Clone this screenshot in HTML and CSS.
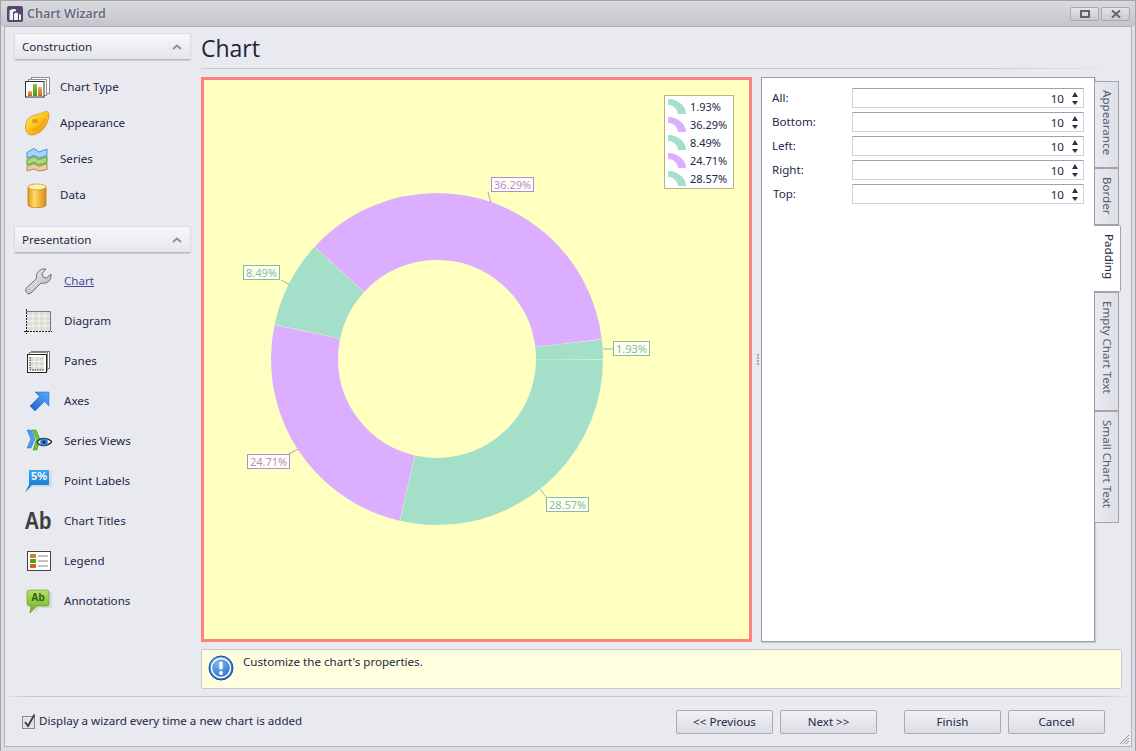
FILE: index.html
```html
<!DOCTYPE html>
<html lang="en">
<head>
<meta charset="utf-8">
<title>Chart Wizard</title>
<link rel="stylesheet" href="styles.css">
</head>
<body>
<svg class="defs" width="0" height="0" aria-hidden="true">
  <defs>
    <linearGradient id="gOrange" x1="0" y1="0" x2="0" y2="1"><stop offset="0" stop-color="#f0b060"/><stop offset="1" stop-color="#c8651a"/></linearGradient>
    <linearGradient id="gGreen" x1="0" y1="0" x2="0" y2="1"><stop offset="0" stop-color="#8cc63f"/><stop offset="1" stop-color="#4f8f10"/></linearGradient>
    <linearGradient id="gPalette" x1="0" y1="0" x2="1" y2="1"><stop offset="0" stop-color="#fff070"/><stop offset=".5" stop-color="#fcc21c"/><stop offset="1" stop-color="#d98a0a"/></linearGradient>
    <linearGradient id="gCyl" x1="0" y1="0" x2="1" y2="0"><stop offset="0" stop-color="#e09a18"/><stop offset=".35" stop-color="#ffdc6a"/><stop offset="1" stop-color="#d88a10"/></linearGradient>
    <linearGradient id="gWrench" x1="0" y1="0" x2="1" y2="1"><stop offset="0" stop-color="#fafafa"/><stop offset="1" stop-color="#a9abb0"/></linearGradient>
    <linearGradient id="gArrow" x1="1" y1="0" x2="0" y2="1"><stop offset="0" stop-color="#5aaaf4"/><stop offset="1" stop-color="#1a62cc"/></linearGradient>
    <linearGradient id="gBubble" x1="0" y1="0" x2="0" y2="1"><stop offset="0" stop-color="#35a8f2"/><stop offset="1" stop-color="#0f6cc8"/></linearGradient>
    <linearGradient id="gNote" x1="0" y1="0" x2="0" y2="1"><stop offset="0" stop-color="#b6e06c"/><stop offset="1" stop-color="#6fae24"/></linearGradient>
    <radialGradient id="gInfo" cx=".4" cy=".3" r=".8"><stop offset="0" stop-color="#7cb8f4"/><stop offset="1" stop-color="#1d5fc0"/></radialGradient>
    <symbol id="arc" viewBox="0 0 18 15"><path d="M0 0C10 0 18 7 18 15H10C10 11 6 6 0 6Z"/></symbol>
  </defs>
</svg>
<div class="window">
  <header class="titlebar">
    <svg class="app-icon" viewBox="0 0 16 16"><rect width="16" height="16" rx="2" fill="#57476f"/><path d="M2.500 14V4.500C4 3 7 2.500 9 3.500V5.500C7.500 5 6 5.500 6 7V14ZM7 14V8C8 6.500 10 6.300 11 7.300V14ZM12 14V8.500C13 8 13.800 8.300 14 9V14Z" fill="#f4f2f8"/></svg>
    <span class="title">Chart Wizard</span>
    <div class="win-buttons">
      <span class="win-btn"><svg width="10" height="8" viewBox="0 0 10 8"><rect x="1" y="1" width="8" height="6" fill="none" stroke="#5f6270" stroke-width="2"/></svg></span>
      <span class="win-btn"><svg width="10" height="8" viewBox="0 0 10 8"><path d="M1 .5 9 7.500M9 .5 1 7.500" stroke="#5f6270" stroke-width="2"/></svg></span>
    </div>
  </header>
  <div class="client">
    <div class="main">
      <aside class="sidebar">
        <div class="group-head"><span>Construction</span><svg width="10" height="6" viewBox="0 0 10 6"><path d="M1 5 5 1.500 9 5" fill="none" stroke="#8d909b" stroke-width="2"/></svg></div>
        <ul class="nav nav-a">
          <li><span class="slot"><svg class="ico" viewBox="0 0 28 28"><rect x="7.500" y="4.500" width="18" height="16" fill="#fff" stroke="#8e8e8e"/><rect x="4.500" y="6.500" width="18" height="16" fill="#fff" stroke="#8e8e8e"/><rect x="1.500" y="8.500" width="18.500" height="15.500" fill="#fff" stroke="#333"/><rect x="4" y="18" width="4" height="5" fill="url(#gOrange)"/><rect x="9" y="11" width="4" height="12" fill="url(#gGreen)"/><rect x="14" y="14" width="4" height="9" fill="url(#gOrange)"/></svg></span>Chart Type</li>
          <li><span class="slot"><svg class="ico" viewBox="0 0 28 28"><path d="M1.500 19C1 12 5 8 9 6.500 13 5 17 5 20 3 23 1.500 25.500 3 25 7 24 15 19 23 11 25.500 6 27 2 25 1.500 19Z" fill="url(#gPalette)" stroke="#c9820c" stroke-width=".6"/><ellipse cx="11" cy="12" rx="3" ry="2" fill="#e29a10"/><path d="M8 21C12 21 18 17 21 10" fill="none" stroke="#eea814" stroke-width="2"/></svg></span>Appearance</li>
          <li><span class="slot"><svg class="ico" viewBox="0 0 28 28"><path d="M3 21.500 10 18.500 15 21.500 23 18.500V24.500L15 26 10 24 3 26Z" fill="#e6cf9a" stroke="#a98b50"/><path d="M3 14.500 10 11.500 15 14.500 23 11.500V17.500L15 20 10 17.500 3 20Z" fill="#a8d87a" stroke="#5d9a35"/><path d="M3 7.500 10 3.500 15 7 23 4V10.500L15 13 10 10.500 3 13Z" fill="#a4d4f8" stroke="#4a90d8"/></svg></span>Series</li>
          <li><span class="slot"><svg class="ico" viewBox="0 0 28 28"><path d="M4 6V24C4 27.500 22 27.500 22 24V6Z" fill="url(#gCyl)" stroke="#b97a10" stroke-width=".7"/><ellipse cx="13" cy="6" rx="9" ry="3" fill="#fff0b0" stroke="#c98c1c" stroke-width=".7"/></svg></span>Data</li>
        </ul>
        <div class="group-head group-second"><span>Presentation</span><svg width="10" height="6" viewBox="0 0 10 6"><path d="M1 5 5 1.500 9 5" fill="none" stroke="#8d909b" stroke-width="2"/></svg></div>
        <ul class="nav nav-b">
          <li><span class="slot"><svg class="ico" viewBox="0 0 28 28"><path d="M2 21.500 12.500 11.500C11.500 6 16 1 22 2L18 6.500 19 10 22.500 11 27 7C28 13 23 17.500 17 16L7 26C5 28 .5 26 2 21.500Z" fill="url(#gWrench)" stroke="#6d7079"/><circle cx="5" cy="23.500" r="1.300" fill="#fff" stroke="#7d7f87" stroke-width=".6"/></svg></span><a class="link" href="#">Chart</a></li>
          <li><span class="slot"><svg class="ico" viewBox="0 0 28 28"><rect x="2" y="4" width="24" height="20" fill="#dcdcd6"/><path d="M2 9H26M2 14H26M2 19H26M9 4V24M15 4V24M21 4V24" stroke="#f6f6f2"/><path d="M2 4.500H26.500V24" fill="none" stroke="#77777a"/><path d="M2.500 2V27M0 24.500H28" stroke="#222" stroke-dasharray="2 1"/></svg></span>Diagram</li>
          <li><span class="slot"><svg class="ico" viewBox="0 0 28 28"><rect x="7.500" y="4.500" width="18" height="17" fill="#fff" stroke="#777"/><rect x="5.500" y="5.500" width="18" height="18" fill="#fff" stroke="#888"/><rect x="3.500" y="7.500" width="19" height="18" fill="#fff" stroke="#222"/><rect x="6" y="10" width="14" height="13" fill="#d8d8d2"/><path d="M6 14.500H20M6 19H20M10.500 10V23M15 10V23" stroke="#f6f6f2"/><path d="M6 10V23H20" fill="none" stroke="#222" stroke-dasharray="1.500 1"/></svg></span>Panes</li>
          <li><span class="slot"><svg class="ico" viewBox="0 0 28 28"><path d="M11 5H25V19L20.500 14.500 11 24 6 19 15.500 9.500Z" fill="url(#gArrow)" stroke="#1e63c4" stroke-width=".5"/></svg></span>Axes</li>
          <li><span class="slot"><svg class="ico" viewBox="0 0 28 28"><path d="M8 3H12L16 12 13 23H9L12.500 12Z" fill="#6cc13a" stroke="#3f8f20" stroke-width=".5"/><path d="M3 3H7L11 12 7 21H3L7 12Z" fill="#4d9cf0" stroke="#1d62c0" stroke-width=".5"/><path d="M13 15C16 10.500 23 10 28 14.500 23 20 16 20 13 15Z" fill="#f4f6f8" stroke="#222" stroke-width="1.300"/><circle cx="20" cy="15" r="3.800" fill="#2f7fd8"/><circle cx="20" cy="15" r="1.600" fill="#0c2f62"/></svg></span>Series Views</li>
          <li><span class="slot"><svg class="ico" viewBox="0 0 28 28"><path d="M7 4H28V20H8L2 27 4 20H7Z" fill="#d9dadd"/><path d="M5 3H25V18H8L1 25 5 18Z" fill="url(#gBubble)"/><text class="ico-num" x="15" y="13" text-anchor="middle">5%</text></svg></span>Point Labels</li>
          <li><span class="slot"><svg class="ico" viewBox="0 0 33 28" preserveAspectRatio="none"><text class="ico-ab-text" x="0.500" y="22">Ab</text></svg></span>Chart Titles</li>
          <li><span class="slot"><svg class="ico" viewBox="0 0 28 28"><rect x="3.500" y="4.500" width="23" height="19" fill="#fff" stroke="#444"/><rect x="6" y="7" width="6" height="4" fill="#c88a3a"/><rect x="6" y="12" width="6" height="4" fill="#5f9e18"/><rect x="6" y="17" width="6" height="4" fill="#d8660f"/><path d="M14 9H24M14 14H24M14 19H24" stroke="#888"/></svg></span>Legend</li>
          <li><span class="slot"><svg class="ico" viewBox="0 0 28 28"><path d="M6 5H28V21H16L10 26 11 21H6Z" fill="#d9dadd"/><path d="M6 3H23Q25 3 25 5V17Q25 19 23 19H13L6 26 7 19Q3 19 3 17V5Q3 3 6 3Z" fill="url(#gNote)" stroke="#5f9a1e" stroke-width=".6"/><text class="ico-note" x="14" y="14" text-anchor="middle">Ab</text></svg></span>Annotations</li>
        </ul>
      </aside>
      <section class="content">
        <h1 class="heading">Chart</h1>
        <div class="work">
          <div class="chart">
            <svg class="donut" width="545" height="559" viewBox="0 0 545 559">
              <g fill="none" stroke-width="67" transform="translate(233 279) scale(1 -1)">
                <circle r="132.500" pathLength="100" stroke="#a4dfc9" stroke-dasharray="1.890 98.110"/>
                <circle r="132.500" pathLength="100" stroke="#dcaeff" stroke-dasharray="36.250 63.750" stroke-dashoffset="-1.930"/>
                <circle r="132.500" pathLength="100" stroke="#a4dfc9" stroke-dasharray="8.450 91.550" stroke-dashoffset="-38.220"/>
                <circle r="132.500" pathLength="100" stroke="#dcaeff" stroke-dasharray="24.670 75.330" stroke-dashoffset="-46.710"/>
                <circle r="132.500" pathLength="100" stroke="#a4dfc9" stroke-dasharray="28.530 71.470" stroke-dashoffset="-71.420"/>
              </g>
              <g stroke-width="1" fill="none">
                <path d="M399 269H409" stroke="#8fc4b0"/>
                <path d="M284 112 287 123" stroke="#b794d4"/>
                <path d="M77 200 86 205" stroke="#8fc4b0"/>
                <path d="M85 374 94 369" stroke="#b794d4"/>
                <path d="M336 409 343 418" stroke="#8fc4b0"/>
              </g>
            </svg>
            <span class="tag tag-teal tag-a">1.93%</span>
            <span class="tag tag-purple tag-b">36.29%</span>
            <span class="tag tag-teal tag-c">8.49%</span>
            <span class="tag tag-purple tag-d">24.71%</span>
            <span class="tag tag-teal tag-e">28.57%</span>
            <ul class="legend">
              <li><svg class="arc arc-teal"><use href="#arc"/></svg>1.93%</li>
              <li><svg class="arc arc-purple"><use href="#arc"/></svg>36.29%</li>
              <li><svg class="arc arc-teal"><use href="#arc"/></svg>8.49%</li>
              <li><svg class="arc arc-purple"><use href="#arc"/></svg>24.71%</li>
              <li><svg class="arc arc-teal"><use href="#arc"/></svg>28.57%</li>
            </ul>
          </div>
          <div class="splitter"><i></i><i></i><i></i><i></i></div>
          <div class="props">
            <div class="form">
              <div class="row"><label>All:</label><div class="spin"><span>10</span><span class="arrows"><i class="up"></i><i class="down"></i></span></div></div>
              <div class="row"><label>Bottom:</label><div class="spin"><span>10</span><span class="arrows"><i class="up"></i><i class="down"></i></span></div></div>
              <div class="row"><label>Left:</label><div class="spin"><span>10</span><span class="arrows"><i class="up"></i><i class="down"></i></span></div></div>
              <div class="row"><label>Right:</label><div class="spin"><span>10</span><span class="arrows"><i class="up"></i><i class="down"></i></span></div></div>
              <div class="row"><label class="label-top">Top:</label><div class="spin"><span>10</span><span class="arrows"><i class="up"></i><i class="down"></i></span></div></div>
            </div>
          </div>
          <div class="tabs">
            <div class="tab tab-1">Appearance</div>
            <div class="tab tab-2">Border</div>
            <div class="tab tab-3 active">Padding</div>
            <div class="tab tab-4">Empty Chart Text</div>
            <div class="tab tab-5">Small Chart Text</div>
          </div>
        </div>
        <div class="info">
          <svg class="info-icon" width="26" height="26" viewBox="0 0 26 26"><circle cx="13" cy="13" r="12" fill="url(#gInfo)" stroke="#1d4f9e"/><circle cx="13" cy="13" r="9.500" fill="none" stroke="#fff" stroke-width="1.500"/><rect x="11.300" y="6.500" width="3.400" height="8" rx="1.500" fill="#fff"/><circle cx="13" cy="18" r="2" fill="#fff"/></svg>
          <span>Customize the chart's properties.</span>
        </div>
      </section>
    </div>
    <footer class="footer">
      <label class="check"><svg width="15" height="16" viewBox="0 0 15 16"><rect x=".5" y="3.500" width="12" height="12" fill="#e4e4e8" stroke="#8a8a96"/><path d="M3 9 6 13 12.500 1.500" fill="none" stroke="#3c3c46" stroke-width="1.800"/></svg>Display a wizard every time a new chart is added</label>
      <div class="buttons">
        <button class="btn" type="button">&lt;&lt; Previous</button>
        <button class="btn" type="button">Next &gt;&gt;</button>
        <button class="btn btn-gap" type="button">Finish</button>
        <button class="btn" type="button">Cancel</button>
      </div>
      <svg class="grip" width="11" height="11" viewBox="0 0 11 11"><path d="M1 10 10 1M4 10 10 4M7 10 10 7" stroke="#8d8e98"/></svg>
    </footer>
  </div>
</div>
</body>
</html>
```
FILE: styles.css
```css
* { box-sizing: border-box; }
html, body { margin: 0; padding: 0; }
body {
  width: 1136px;
  height: 751px;
  overflow: hidden;
  font: 11.6px "Noto Sans", sans-serif;
  color: #1e2748;
}
.defs { position: absolute; }
ul { list-style: none; margin: 0; padding: 0; }

.window {
  width: 1136px;
  height: 751px;
  display: flex;
  flex-direction: column;
  background: #dddee2;
  border: 1px solid #a2a3ae;
  border-bottom: 0;
  padding: 0 3px 4px;
}
.titlebar {
  height: 25px;
  display: flex;
  align-items: center;
  margin: 0 -3px;
  padding: 0 5px 0 6px;
  background: linear-gradient(#d9dade, #c5c6cb);
}
.app-icon { width: 16px; height: 16px; }
.title {
  margin-left: 4px;
  font-size: 12.5px;
  font-weight: 600;
  color: #666a80;
  text-shadow: 0 0 2px #f0f0f4;
}
.win-buttons { margin-left: auto; display: flex; gap: 2px; }
.win-btn {
  width: 29px;
  height: 14px;
  display: flex;
  align-items: center;
  justify-content: center;
  border: 1px solid #a9aab4;
  border-radius: 2px;
  background: linear-gradient(#e4e5e9, #c9cad0);
}

.client {
  flex: 1;
  min-height: 0;
  display: flex;
  flex-direction: column;
  background: #e9eaef;
  border: 1px solid #b1b2bd;
}
.main {
  flex: 1;
  min-height: 0;
  display: flex;
  gap: 10px;
  padding: 6px 9px 7px;
}

.sidebar { width: 177px; flex: none; }
.group-head {
  height: 27px;
  display: flex;
  align-items: center;
  justify-content: space-between;
  padding: 0 8px 0 7px;
  background: linear-gradient(#f7f7f9, #e6e7eb);
  border: 1px solid #dcdde2;
  border-bottom-color: #b7b8c2;
  border-radius: 2px;
  box-shadow: 0 1px 1px #c9cad2;
}
.group-second { margin-top: 13px; }
.nav li { display: flex; align-items: center; line-height: 15px; padding-bottom: 1px; }
.nav .slot { margin-bottom: -1px; }
.nav-a { margin-top: 9px; }
.nav-a li { height: 36px; }
.nav-a .slot { width: 36px; margin-left: 10px; }
.nav-b { margin-top: 8px; }
.nav-b li { height: 40px; }
.nav-b .slot { width: 40px; margin-left: 10px; }
.slot { display: flex; flex: none; }
.ico { width: 28px; height: 28px; }
.link { color: #4a4a90; text-decoration: underline; }
.ico-num { font: bold 11px "Liberation Sans", sans-serif; fill: #fff; }
.ico-note { font: bold 10px "Liberation Sans", sans-serif; fill: #2f5a10; }
.ico-ab-text { font: bold 24px "Liberation Sans", sans-serif; fill: #3d3d3d; }

.content { flex: 1; min-width: 0; display: flex; flex-direction: column; }
.heading {
  height: 36px;
  margin: 0 0 8px;
  font: 400 23px/30px "Open Sans", sans-serif;
  color: #20243a;
  border-bottom: 1px solid;
  border-image: linear-gradient(90deg, #c6c7d0 85%, transparent) 1;
}
.work { flex: 1; min-height: 0; display: flex; }
.chart {
  position: relative;
  width: 551px;
  flex: none;
  background: #ffffc0;
  border: 3px solid #ff8080;
}
.donut { display: block; }
.tag {
  position: absolute;
  height: 15px;
  padding: 0 2px;
  font-size: 11px;
  line-height: 13px;
  background: #fffff0;
  border: 1px solid;
  white-space: nowrap;
}
.tag-teal { color: #86bba6; border-color: #86bba6; }
.tag-purple { color: #b48ad8; border-color: #b48ad8; }
.tag-a { left: 409px; top: 261px; }
.tag-b { left: 287px; top: 97px; }
.tag-c { left: 39px; top: 185px; }
.tag-d { left: 43px; top: 374px; }
.tag-e { left: 342px; top: 417px; }
.legend {
  position: absolute;
  left: 460px;
  top: 15px;
  width: 70px;
  height: 94px;
  padding: 1px 0 0 3px;
  background: #fff;
  border: 1px solid #b4b484;
  font-size: 11px;
}
.legend li { height: 18px; display: flex; align-items: center; gap: 4px; }
.arc { width: 18px; height: 15px; flex: none; }
.arc-teal { fill: #a4dfc9; }
.arc-purple { fill: #dcaeff; }

.splitter {
  width: 9px;
  flex: none;
  display: flex;
  flex-direction: column;
  align-items: center;
  justify-content: center;
  gap: 1px;
  padding-left: 2px;
}
.splitter i { width: 2px; height: 2px; background: #a9aab4; }
.props {
  width: 334px;
  flex: none;
  background: #fff;
  border: 1px solid #9b9ca8;
  box-shadow: 1px 1px 1px #c9cad2;
}
.form {
  padding: 10px 10px 0;
  display: flex;
  flex-direction: column;
  gap: 4px;
}
.row { height: 20px; display: flex; align-items: center; line-height: 15px; }
.row label { width: 80px; flex: none; padding-bottom: 1px; }
.row .label-top { padding-left: 1px; }
.spin {
  width: 232px;
  height: 20px;
  display: flex;
  align-items: center;
  justify-content: flex-end;
  padding-right: 4px;
  background: #fff;
  border: 1px solid #d2d3da;
  border-top-color: #a0a1ad;
}
.arrows {
  width: 9px;
  margin-left: 6px;
  display: flex;
  flex-direction: column;
  align-items: center;
  gap: 4px;
}
.arrows i { width: 1px; height: 0; border: 3px solid transparent; }
.arrows .up { border-top: 0; border-bottom: 5px solid #2d3040; }
.arrows .down { border-bottom: 0; border-top: 4px solid #2d3040; }

.tabs { flex: none; width: 27px; padding-top: 4px; display: flex; flex-direction: column; }
.tab {
  width: 24px;
  writing-mode: vertical-rl;
  padding-top: 8px;
  line-height: 22px;
  color: #565c72;
  background: linear-gradient(90deg, #e9eaef, #dfe0e5);
  border: 1px solid #a2a3ae;
  border-left: 0;
  white-space: nowrap;
}
.tab-1 { height: 87px; }
.tab-2 { height: 57px; }
.tab-3 { height: 67px; }
.tab-4 { height: 119px; }
.tab-5 { height: 112px; }
.tab.active {
  width: 27px;
  margin-left: -1px;
  padding-left: 4px;
  color: #1e2748;
  background: #fff;
  border-radius: 0 2px 2px 0;
  position: relative;
}

.info {
  height: 40px;
  margin-top: 7px;
  display: flex;
  align-items: flex-start;
  padding: 4px 6px;
  background: #ffffe0;
  border: 1px solid #c8c9d6;
  border-radius: 2px;
}
.info-icon { flex: none; margin: 1px 9px 0 0; }

.footer {
  position: relative;
  height: 50px;
  flex: none;
  display: flex;
  padding: 13px 26px 0 17px;
  border-top: 1px solid;
  border-image: linear-gradient(90deg, transparent, #c6c7d0 2%, #c6c7d0 97%, transparent) 1;
}
.check { display: flex; align-items: flex-start; gap: 2px; padding-top: 3px; }
.buttons { margin-left: auto; display: flex; gap: 7px; }
.btn {
  width: 97px;
  height: 24px;
  padding: 0 0 1px;
  font: inherit;
  color: #1e2748;
  background: linear-gradient(#f0f1f4, #dcdde3);
  border: 1px solid #a9aab5;
  border-radius: 2px;
}
.btn-gap { margin-left: 20px; }
.grip { position: absolute; right: 1px; bottom: 1px; }
```
